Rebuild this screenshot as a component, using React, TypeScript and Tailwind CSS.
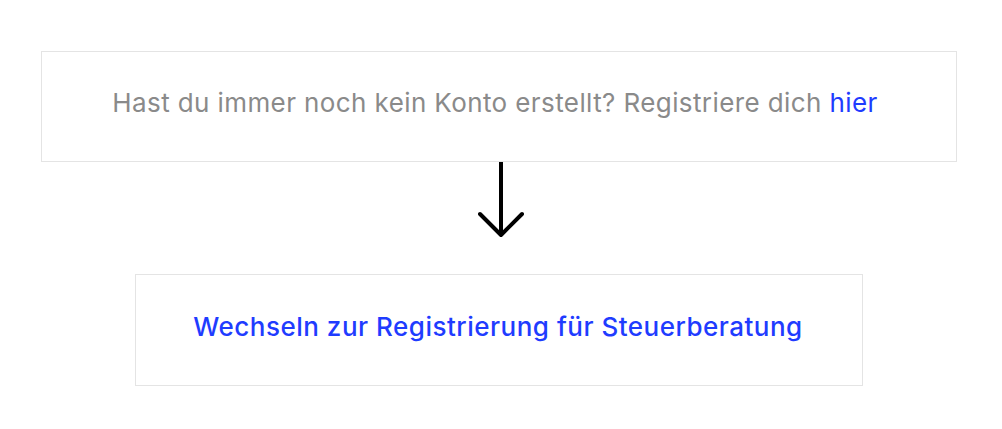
import React from "react";

const DownArrow = () => (
  <svg width="46" height="76" viewBox="0 0 46 76" fill="none" className="block ml-[4px]">
    <path d="M23 0 V72" stroke="#000" strokeWidth="4" />
    <path d="M2 52 L23 73 L44 52" stroke="#000" strokeWidth="4" strokeLinecap="round" strokeLinejoin="round" />
  </svg>
);

export default function App() {
  return (
    <div
      className="w-[1002px] h-[429px] bg-white flex flex-col items-center pt-[51px] pr-[4px]"
      style={{ fontFamily: "Inter, 'Liberation Sans', sans-serif" }}
    >
      <div className="w-[916px] h-[111px] border border-[#e4e4e4] flex items-center justify-center pb-[8px] pr-[8px]">
        <p className="text-[26px] leading-[32px] text-[#8a8a8a] tracking-[0.4px]">
          Hast du immer noch kein Konto erstellt? Registriere dich{" "}
          <a className="text-[#1f3cff]">hier</a>
        </p>
      </div>
      <DownArrow />
      <div className="mt-[36px] w-[728px] h-[112px] border border-[#e4e4e4] flex items-center justify-center pb-[6px] pr-[2px]">
        <p className="text-[26px] leading-[32px] text-[#1f3cff] font-medium tracking-[0.5px]">
          Wechseln zur Registrierung für Steuerberatung
        </p>
      </div>
    </div>
  );
}
